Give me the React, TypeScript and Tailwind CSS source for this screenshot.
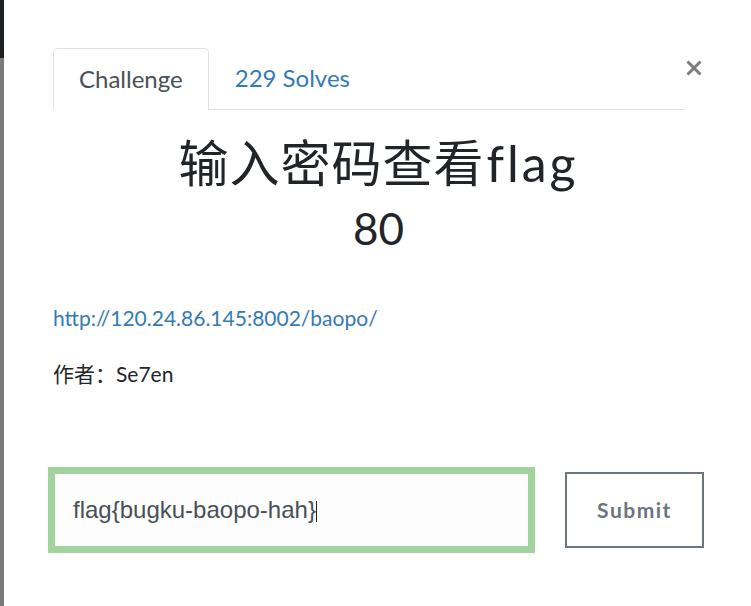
export default function App() {
  return (
    <div
      className="w-[751px] h-[606px] bg-white flex overflow-hidden text-[#212529]"
      style={{ fontFamily: 'Lato, "Noto Sans CJK SC", sans-serif' }}
    >
      <div className="w-[4px] shrink-0 flex flex-col">
        <div className="h-[58px] bg-[#1d2023]" />
        <div className="flex-1 bg-[#7b7b7b]" />
      </div>
      <div className="flex-1 pl-[49px] pr-[48px] pt-[48px] flex flex-col">
        <div className="flex items-start">
          <div className="flex-1 flex h-[62px] border-b border-[#dee2e6]">
            <div className="h-[62px] px-[25px] pb-[2px] border border-b-0 border-[#dee2e6] rounded-t-[5px] bg-white flex items-center text-[24px] text-[#495057]">
              Challenge
            </div>
            <div className="px-[26px] pb-[2px] flex items-center text-[24px] text-[#337ab7]">
              229 Solves
            </div>
          </div>
          <div className="w-[20px] pt-[12px] pl-[2px]">
            <svg width="16" height="16" viewBox="0 0 16 16">
              <path d="M1.5 1.5 L14.5 14.5 M14.5 1.5 L1.5 14.5" stroke="#7d7d7d" strokeWidth="3" fill="none" />
            </svg>
          </div>
        </div>

        <div className="mt-[23px] text-center text-[50px] leading-[60px] text-[#212529] [font-variant-ligatures:none]">
          <span className="tracking-[1px]">输入密码查看</span>
          <span className="tracking-[3px] ml-[2px]">flag</span>
        </div>
        <div className="mt-[10px] text-center text-[44px] leading-[50px] text-[#212529]">80</div>

        <div className="mt-[51px] text-[21px] leading-[28px] text-[#337ab7]">
          http://120.24.86.145:8002/baopo/
        </div>
        <div className="mt-[28px] text-[21px] leading-[28px] text-[#212529]">作者：Se7en</div>

        <div className="mt-[79px] ml-[-5px] flex items-center gap-[30px]">
          <div className="w-[487px] h-[86px] border-[7px] border-[#a3d39c] bg-[#fdfdfd] flex items-center pl-[18px]">
            <span
              className="text-[24px] text-[#495057]"
              style={{ fontFamily: '"Liberation Sans", Arial, sans-serif' }}
            >
              flag{'{'}bugku-baopo-hah{'}'}
            </span>
            <span className="inline-block w-[1px] h-[21px] bg-[#222] mt-[2px]" />
          </div>
          <div className="w-[139px] h-[76px] border-2 border-[#6c757d] flex items-center justify-center text-[21px] font-bold tracking-[1.5px] text-[#6c757d]">
            Submit
          </div>
        </div>
      </div>
    </div>
  );
}
